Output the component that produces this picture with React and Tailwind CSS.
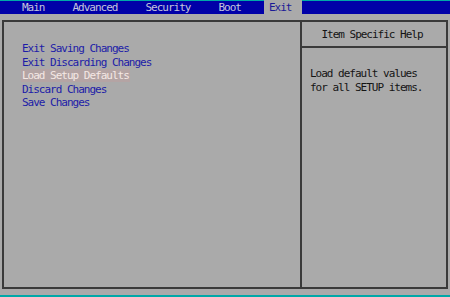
export default function App() {
  const mono = { fontFamily: '"DejaVu Sans Mono", "Liberation Mono", monospace' };
  return (
    <div
      className="w-[450px] h-[297px] bg-[#aaaaaa] flex flex-col overflow-hidden text-[11px] tracking-[-1px] font-normal"
      style={mono}
    >
      <div className="h-[1px] bg-[#00a8a8]" />
      <div className="h-[13px] bg-[#0000a8] flex items-stretch pl-[22px] text-[#c4c4dc] leading-[13px]">
        <span>Main</span>
        <span className="ml-[28px]">Advanced</span>
        <span className="ml-[28px]">Security</span>
        <span className="ml-[28px]">Boot</span>
        <span className="ml-[23px] -mt-[1px] pt-[1px] pl-[5px] pr-[11px] bg-[#aaaaaa] text-[#1a1a96]">Exit</span>
      </div>
      <div className="mt-[6px] ml-[2px] w-[446px] h-[269px] border-2 border-[#3a3a3a] flex">
        <div className="flex-1 flex flex-col pt-[20px] pl-[18px] leading-[13.5px] text-[#1c1ca8]">
          <div>Exit Saving Changes</div>
          <div>Exit Discarding Changes</div>
          <div>
            <span className="bg-[#b4a4a4] text-[#f4e8e4] px-[1px] -mx-[1px]">Load Setup Defaults</span>
          </div>
          <div>Discard Changes</div>
          <div>Save Changes</div>
        </div>
        <div className="w-[2px] bg-[#3a3a3a]" />
        <div className="w-[144px] flex flex-col text-[#141414]">
          <div className="h-[24px] flex items-center justify-center pr-[4px] pt-[2px]">Item Specific Help</div>
          <div className="h-[2px] bg-[#3a3a3a]" />
          <div className="pt-[19px] pl-[8px] leading-[14px]">
            <div>Load default values</div>
            <div>for all SETUP items.</div>
          </div>
        </div>
      </div>
      <div className="flex-1" />
      <div className="h-[2px] bg-[#00a8a8]" />
    </div>
  );
}
